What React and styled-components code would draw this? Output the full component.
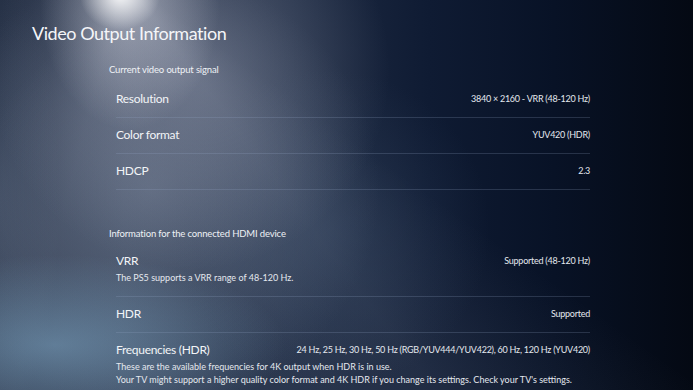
import React from 'react';
import styled, { createGlobalStyle } from 'styled-components';

const GlobalStyle = createGlobalStyle`
  html, body {
    margin: 0;
    padding: 0;
    background: #07101f;
  }
  body {
    font-family: Lato, "Open Sans", sans-serif;
  }
`;

const currentSignal = [
  { label: 'Resolution', value: '3840 × 2160 - VRR (48-120 Hz)' },
  { label: 'Color format', value: 'YUV420 (HDR)' },
  { label: 'HDCP', value: '2.3' },
];

const hdmiDevice = [
  {
    label: 'VRR',
    value: 'Supported (48-120 Hz)',
    notes: ['The PS5 supports a VRR range of 48-120 Hz.'],
  },
  { label: 'HDR', value: 'Supported' },
  {
    label: 'Frequencies (HDR)',
    value: '24 Hz, 25 Hz, 30 Hz, 50 Hz (RGB/YUV444/YUV422), 60 Hz, 120 Hz (YUV420)',
    notes: [
      'These are the available frequencies for 4K output when HDR is in use.',
      "Your TV might support a higher quality color format and 4K HDR if you change its settings. Check your TV's settings.",
    ],
    last: true,
  },
];

const InfoRow = ({ item }) => (
  <Row last={item.last} hasNotes={!!item.notes}>
    <Line>
      <Label>{item.label}</Label>
      <Value>{item.value}</Value>
    </Line>
    {item.notes && (
      <Notes>
        {item.notes.map(n => <div key={n}>{n}</div>)}
      </Notes>
    )}
  </Row>
);

const App = () => (
  <>
    <GlobalStyle />
    <Screen>
      <Title>Video Output Information</Title>
      <Section>
        <SectionHeader>Current video output signal</SectionHeader>
        <List>
          {currentSignal.map(item => <InfoRow key={item.label} item={item} />)}
        </List>
      </Section>
      <Section gap={37}>
        <SectionHeader tight>Information for the connected HDMI device</SectionHeader>
        <List>
          {hdmiDevice.map(item => <InfoRow key={item.label} item={item} />)}
        </List>
      </Section>
    </Screen>
  </>
);

// spotlight from the top left, a soft beam, and a blue glow low on the left
const Screen = styled.div`
  position: relative;
  width: 693px;
  height: 390px;
  overflow: hidden;
  color: #eef1f5;
  background:
    radial-gradient(ellipse 40px 34px at 120px -4px, rgba(255, 255, 255, 0.9), rgba(255, 255, 255, 0) 100%),
    radial-gradient(ellipse 90px 130px at 130px 0px, rgba(225, 226, 236, 0.5), rgba(225, 226, 236, 0) 100%),
    radial-gradient(ellipse 200px 200px at 190px 70px, rgba(170, 174, 192, 0.4), rgba(170, 174, 192, 0) 100%),
    radial-gradient(ellipse 230px 90px at 55px 345px, rgba(120, 160, 190, 0.6), rgba(120, 160, 190, 0) 100%),
    radial-gradient(ellipse 230px 220px at 150px 190px, rgba(115, 128, 150, 0.55), rgba(115, 128, 150, 0) 100%),
    radial-gradient(ellipse 160px 160px at 330px 230px, rgba(60, 78, 105, 0.4), rgba(60, 78, 105, 0) 100%),
    conic-gradient(from 125deg at 125px -20px, rgba(190, 198, 215, 0) 0deg, rgba(190, 198, 215, 0.1) 18deg, rgba(190, 198, 215, 0.05) 40deg, rgba(190, 198, 215, 0.1) 70deg, rgba(190, 198, 215, 0) 100deg, rgba(190, 198, 215, 0) 360deg),
    radial-gradient(ellipse 60px 220px at 0px 200px, rgba(80, 95, 118, 0.35), rgba(80, 95, 118, 0) 100%),
    linear-gradient(90deg, #253045 0%, #2e3a50 18%, #1f2c44 42%, #0f1b33 62%, #081226 80%, #040913 100%);
`;

const Title = styled.h1`
  margin: 0;
  padding: 22px 0 0 32px;
  font-size: 18px;
  line-height: 22px;
  font-weight: 400;
  letter-spacing: -0.45px;
  color: #f4f5f8;
`;

const Section = styled.section`
  margin: ${p => p.gap || 19}px 0 0 109px;
  width: 481px;
`;

const SectionHeader = styled.div`
  font-size: 9.5px;
  line-height: 14px;
  letter-spacing: -0.15px;
  color: #eef1f5;
  margin-bottom: ${p => (p.tight ? 3 : 5)}px;
`;

const List = styled.div`
  padding-left: 7px;
`;

const Row = styled.div`
  padding: 9px 0 ${p => (p.hasNotes ? 12 : 10)}px;
  border-bottom: ${p => (p.last ? 'none' : '1px solid rgba(150, 170, 200, 0.22)')};
`;

const Line = styled.div`
  display: flex;
  align-items: center;
  justify-content: space-between;
  height: 16px;
`;

const Label = styled.div`
  font-size: 12px;
  line-height: 16px;
  letter-spacing: -0.3px;
  color: #f2f4f7;
`;

const Value = styled.div`
  font-size: 9px;
  line-height: 16px;
  letter-spacing: -0.25px;
  color: #e4e8ee;
  white-space: nowrap;
`;

const Notes = styled.div`
  margin-top: 2px;
  font-size: 9px;
  line-height: 13px;
  color: #e4e8ee;
  white-space: nowrap;
`;

export default App;
